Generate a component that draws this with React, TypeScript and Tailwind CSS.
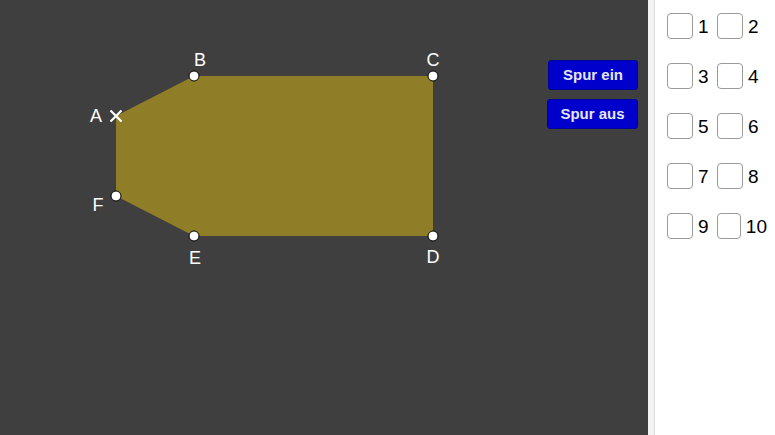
const points = [
  { x: 194, y: 76 },
  { x: 433, y: 76 },
  { x: 433, y: 236 },
  { x: 194, y: 236 },
  { x: 116, y: 196 },
];

const labels = [
  { t: "A", x: 96, y: 122 },
  { t: "B", x: 200, y: 66 },
  { t: "C", x: 433, y: 66 },
  { t: "D", x: 433, y: 263 },
  { t: "E", x: 195, y: 264 },
  { t: "F", x: 98, y: 211 },
];

function Canvas() {
  return (
    <svg width="648" height="435" className="absolute inset-0">
      <polygon
        points="116,116 194,76 433,76 433,236 194,236 116,196"
        fill="#8f7e27"
      />
      {points.map((p, i) => (
        <circle key={i} cx={p.x} cy={p.y} r="5" fill="#fff" stroke="#000" strokeWidth="1" />
      ))}
      <path d="M110.5 110.5 L121.5 121.5 M121.5 110.5 L110.5 121.5" stroke="#fff" strokeWidth="2.2" />
      {labels.map((l) => (
        <text
          key={l.t}
          x={l.x}
          y={l.y}
          fill="#fff"
          fontSize="18"
          textAnchor="middle"
          fontFamily="Liberation Sans, Arial, sans-serif"
        >
          {l.t}
        </text>
      ))}
    </svg>
  );
}

function Box({ n }: { n: number }) {
  return (
    <div className="flex items-center">
      <div className="w-[26px] h-[26px] rounded-[4px] border border-[#9a9a9a] bg-white"></div>
      <span className="ml-[5px] text-[19px] leading-none text-black">{n}</span>
    </div>
  );
}

export default function App() {
  return (
    <div className="flex w-[775px] h-[435px] overflow-hidden font-['Liberation_Sans',Arial,sans-serif]">
      <div className="relative w-[648px] h-full bg-[#3f3f3f] shrink-0">
        <Canvas />
        <div className="absolute left-[547px] top-[60px] flex flex-col gap-[9px]">
          <button className="ml-px w-[90px] h-[30px] rounded-[3px] bg-[#0000cc] border border-[#000099] text-[#e6e6f5] text-[15px] font-bold">
            Spur ein
          </button>
          <button className="w-[91px] h-[30px] rounded-[3px] bg-[#0000cc] border border-[#000099] text-[#e6e6f5] text-[15px] font-bold">
            Spur aus
          </button>
        </div>
      </div>
      <div className="w-[7px] h-full bg-[#f3f3f3] border-r border-[#dcdcdc] shrink-0"></div>
      <div className="flex-1 bg-white pl-[12px] pt-[13px]">
        <div className="grid grid-cols-[50px_50px] gap-y-[24px]">
          {[1, 2, 3, 4, 5, 6, 7, 8, 9, 10].map((n) => (
            <Box key={n} n={n} />
          ))}
        </div>
      </div>
    </div>
  );
}
